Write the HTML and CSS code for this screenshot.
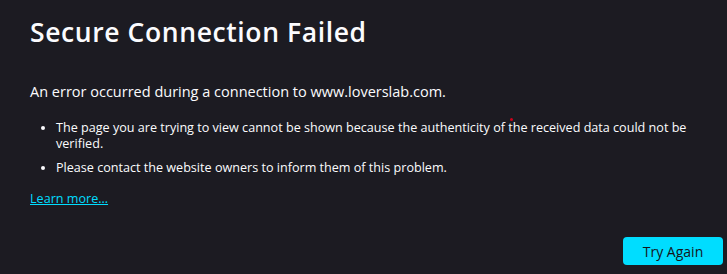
FILE: index.html
```html
<!DOCTYPE html>
<html>
<head>
<meta charset="utf-8">
<link rel="stylesheet" href="styles.css">
</head>
<body>
<main class="page">
  <section class="content">
    <h1 class="title">Secure Connection Failed</h1>
    <p class="desc">An error occurred during a connection to www.loverslab.com.</p>
    <ul class="list">
      <li>The page you are trying to view cannot be shown because the authenticity of the received data could not be verified.</li>
      <li>Please contact the website owners to inform them of this problem.</li>
    </ul>
    <a class="learn" href="#">Learn more…</a>
  </section>
  <div class="actions">
    <button class="retry">Try Again</button>
  </div>
  <span class="dot"></span>
</main>
</body>
</html>
```
FILE: styles.css
```css
html, body {
  margin: 0;
  padding: 0;
  background: #1c1b22;
  color: #fbfbfe;
  font-family: "Open Sans", "Noto Sans", sans-serif;
}
.page {
  position: relative;
  box-sizing: border-box;
  height: 274px;
  padding: 0 4px 9px 30px;
  display: flex;
  flex-direction: column;
}
.content {
  flex: 1;
}
.title {
  margin: 12px 0 0;
  font-size: 26.5px;
  letter-spacing: 0.6px;
  font-weight: 600;
  line-height: 40px;
}
.desc {
  margin: 29px 0 0;
  font-size: 14.5px;
  line-height: 22px;
}
.list {
  margin: 17px 0 0;
  padding-left: 26px;
  font-size: 12.6px;
  line-height: 16px;
}
.list li {
  margin-bottom: 8px;
}
.learn {
  display: inline-block;
  margin-top: 7px;
  font-size: 12.6px;
  color: #00ddff;
  line-height: 16px;
}
.actions {
  display: flex;
  justify-content: flex-end;
}
.retry {
  width: 100px;
  height: 28px;
  border: none;
  border-radius: 4px;
  background: #00ddff;
  color: #15141a;
  font-family: "Open Sans", "Noto Sans", sans-serif;
  font-size: 14px;
  padding: 0;
}
.dot {
  position: absolute;
  left: 510px;
  top: 118px;
  width: 3px;
  height: 3px;
  border-radius: 50%;
  background: #d0021b;
}
```
